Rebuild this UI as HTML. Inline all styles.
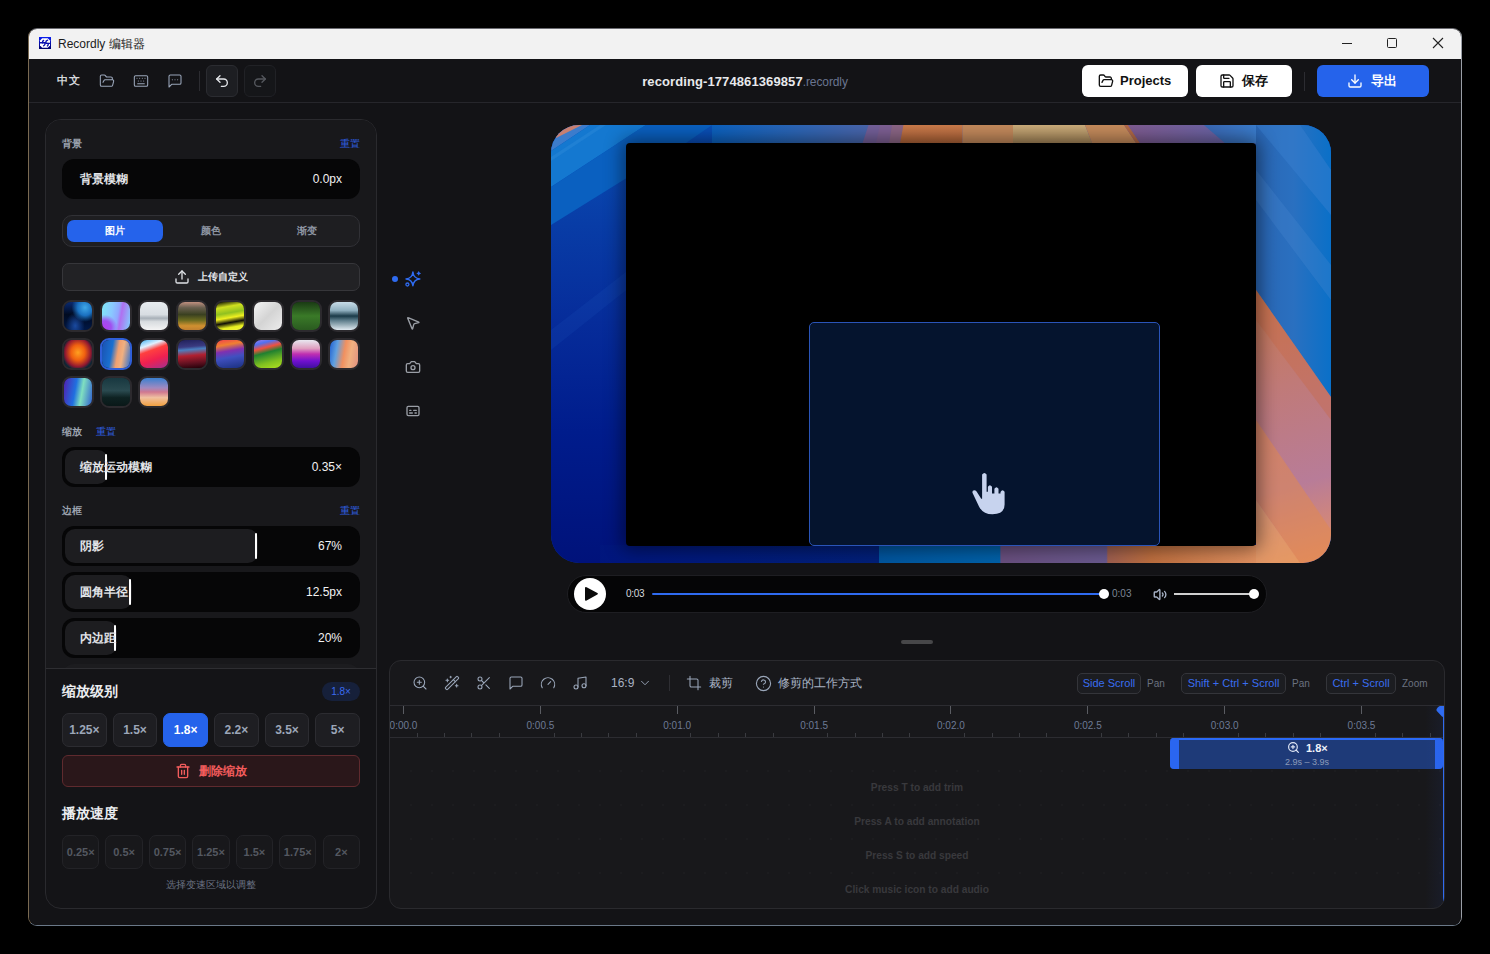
<!DOCTYPE html>
<html><head><meta charset="utf-8">
<style>
*{box-sizing:border-box;margin:0;padding:0}
html,body{width:1490px;height:954px;background:#000;overflow:hidden;font-family:"Liberation Sans",sans-serif}
.a{position:absolute}
#win{position:absolute;left:29px;top:29px;width:1432px;height:896px;border-radius:8px;overflow:hidden;background:#131316}
#pg{position:absolute;left:-29px;top:-29px;width:1490px;height:954px}
svg{display:block}
.ic{stroke:#9aa6b9;fill:none;stroke-width:1.6;stroke-linecap:round;stroke-linejoin:round}

.lab{left:62px;font-size:10px;font-weight:bold;color:#9ca3af;line-height:14px}
.rst{font-size:10px;color:#2f5fe0;line-height:12px;width:21px;text-align:right}
.sl{left:62px;width:298px;height:40px;border-radius:12px;background:#060607}
.slf{left:65px;height:34px;border-radius:10px;background:#1d1d20}
.sll{left:80px;font-size:12px;font-weight:bold;color:#e2e4e8;line-height:16px;white-space:nowrap}
.slv{left:240px;width:102px;text-align:right;font-size:12px;color:#f2f2f2;line-height:16px}
.tab{top:220px;width:96px;height:22px;line-height:22px;text-align:center;font-size:10px;font-weight:bold;color:#8f96a3}
.th{width:32px;height:32px;border:2px solid #2c2a2e;border-radius:9px}
.zb{top:713px;width:44.7px;height:34px;border-radius:7px;background:#1e1e22;border:1px solid #2c2c31;color:#9ca6b8;font-size:12px;font-weight:bold;line-height:32px;text-align:center}
.sb{top:835px;width:37.4px;height:34px;border-radius:7px;background:#18181b;border:1px solid #232327;color:#545861;font-size:11px;font-weight:bold;line-height:32px;text-align:center}

.rl{top:720px;width:60px;text-align:center;font-size:10px;color:#6d7a95;line-height:12px}
.kb{top:673px;height:21px;border-radius:5px;background:#1c1d21;border:1px solid #34353a;color:#3a6df0;font-size:11px;line-height:19px;text-align:center;white-space:nowrap}
.kt{top:677px;font-size:10px;color:#6b7280;line-height:13px}
.hint{left:767px;width:300px;text-align:center;font-size:10.2px;font-weight:bold;color:#39393d;line-height:12px;white-space:nowrap}
</style></head><body>
<div class="a" style="left:28px;top:28px;width:1434px;height:898px;border-radius:9px;border:1px solid #6a7888;border-left-color:#7a6a52;border-top-color:#6a6a70;border-right-color:#9a9ea6"></div>
<div id="win"><div id="pg">

<!-- title bar -->
<div class="a" style="left:29px;top:29px;width:1432px;height:30px;background:#f2f2f2"></div>
<svg class="a" style="left:39px;top:37px" width="12" height="12" viewBox="0 0 12 12"><defs><linearGradient id="ig" x1="0" y1="0" x2="0" y2="1"><stop offset="0" stop-color="#0a1ef0"/><stop offset="1" stop-color="#00006a"/></linearGradient><linearGradient id="gT2" x1="712" y1="0" x2="868" y2="0" gradientUnits="userSpaceOnUse"><stop offset="0" stop-color="#0c62c0"/><stop offset="0.5" stop-color="#2a66b8"/><stop offset="1" stop-color="#4a66ac"/></linearGradient>
  <linearGradient id="gO1" x1="0" y1="125" x2="0" y2="143" gradientUnits="userSpaceOnUse"><stop offset="0" stop-color="#cc7c4c"/><stop offset="1" stop-color="#b06438"/></linearGradient>
  <linearGradient id="gTan" x1="0" y1="125" x2="0" y2="143" gradientUnits="userSpaceOnUse"><stop offset="0" stop-color="#ccae7c"/><stop offset="1" stop-color="#a8885a"/></linearGradient>
  <linearGradient id="gP1" x1="1128" y1="0" x2="1225" y2="0" gradientUnits="userSpaceOnUse"><stop offset="0" stop-color="#805c92"/><stop offset="1" stop-color="#6a64a6"/></linearGradient>
  <linearGradient id="gBl1" x1="1204" y1="0" x2="1256" y2="0" gradientUnits="userSpaceOnUse"><stop offset="0" stop-color="#3a68b4"/><stop offset="1" stop-color="#3a7ccc"/></linearGradient>
 </defs><rect width="12" height="12" fill="url(#ig)"/><polygon points="3.2,1.2 8.8,1.2 11,3.4 11,8.6 8.8,10.8 3.2,10.8 1,8.6 1,3.4" fill="#fff"/><g fill="none" stroke="#0a10b0" stroke-width="1.4" stroke-linecap="round"><path d="M1 5.8 H6 Q7 5.8 7.5 6.4 L11 6.4"/><path d="M3.6 5.8 Q3.2 4.2 4.6 3.4"/><path d="M6.8 5.8 Q6.5 4 8.6 3.2"/><path d="M6 6.2 Q6.3 8.2 4.6 8.8"/><path d="M9 6.4 Q9.8 8 8.4 8.9"/></g></svg>
<div class="a" style="left:58px;top:36px;font-size:12px;color:#1b1b1b;line-height:16px;white-space:nowrap">Recordly 编辑器</div>
<div class="a" style="left:1342px;top:43px;width:10px;height:1px;background:#222"></div>
<div class="a" style="left:1387px;top:38px;width:10px;height:10px;border:1px solid #222;border-radius:1.5px"></div>
<svg class="a" style="left:1432px;top:37px" width="12" height="12" viewBox="0 0 12 12"><path d="M1 1 L11 11 M11 1 L1 11" stroke="#222" stroke-width="1.1"/></svg>

<!-- toolbar -->
<div class="a" style="left:57px;top:73px;font-size:11px;font-weight:bold;color:#d4d6da;line-height:14px;letter-spacing:0.5px">中文</div>
<svg class="a" style="left:99px;top:73px" width="16" height="16" viewBox="0 0 24 24" class="ic"><path class="ic" stroke-width="2" d="m6 14 1.5-2.9A2 2 0 0 1 9.24 10H20a2 2 0 0 1 1.94 2.5l-1.54 6a2 2 0 0 1-1.95 1.5H4a2 2 0 0 1-2-2V5a2 2 0 0 1 2-2h3.9a2 2 0 0 1 1.69.9l.81 1.2a2 2 0 0 0 1.67.9H18a2 2 0 0 1 2 2v2"/></svg>
<svg class="a" style="left:133px;top:73px" width="16" height="16" viewBox="0 0 24 24"><g class="ic" stroke-width="2"><path d="M10 8h.01M12 12h.01M14 8h.01M16 12h.01M18 8h.01M6 8h.01M7 16h10M8 12h.01"/><rect width="20" height="16" x="2" y="4" rx="2"/></g></svg>
<svg class="a" style="left:167px;top:73px" width="16" height="16" viewBox="0 0 24 24"><g class="ic" stroke-width="2"><path d="M21 15a2 2 0 0 1-2 2H7l-4 4V5a2 2 0 0 1 2-2h14a2 2 0 0 1 2 2z"/><path d="M8 10h.01M12 10h.01M16 10h.01"/></g></svg>
<div class="a" style="left:199px;top:71px;width:1px;height:20px;background:#2c2c31"></div>
<div class="a" style="left:206px;top:65px;width:32px;height:32px;border-radius:6px;background:#1d1e22;border:1px solid #2b2c31"></div>
<svg class="a" style="left:214px;top:73px" width="16" height="16" viewBox="0 0 24 24"><g fill="none" stroke="#e4e6ea" stroke-width="2" stroke-linecap="round" stroke-linejoin="round"><path d="M9 14 4 9l5-5"/><path d="M4 9h10.5a5.5 5.5 0 0 1 5.5 5.5a5.5 5.5 0 0 1-5.5 5.5H11"/></g></svg>
<div class="a" style="left:244px;top:65px;width:32px;height:32px;border-radius:6px;background:#151619;border:1px solid #212226"></div>
<svg class="a" style="left:252px;top:73px" width="16" height="16" viewBox="0 0 24 24"><g fill="none" stroke="#55585e" stroke-width="2" stroke-linecap="round" stroke-linejoin="round"><path d="m15 14 5-5-5-5"/><path d="M20 9H9.5A5.5 5.5 0 0 0 4 14.5A5.5 5.5 0 0 0 9.5 20H13"/></g></svg>

<div class="a" style="left:600px;top:73px;width:290px;text-align:center;line-height:16px;white-space:nowrap"><span style="font-size:13px;font-weight:bold;color:#e8e9ec;letter-spacing:0.1px">recording-1774861369857</span><span style="font-size:12px;color:#6a7590;letter-spacing:-0.1px">.recordly</span></div>

<div class="a" style="left:1082px;top:65px;width:106px;height:32px;border-radius:6px;background:#fff"></div>
<svg class="a" style="left:1098px;top:73px" width="16" height="16" viewBox="0 0 24 24"><path fill="none" stroke="#111" stroke-width="2" stroke-linecap="round" stroke-linejoin="round" d="m6 14 1.5-2.9A2 2 0 0 1 9.24 10H20a2 2 0 0 1 1.94 2.5l-1.54 6a2 2 0 0 1-1.95 1.5H4a2 2 0 0 1-2-2V5a2 2 0 0 1 2-2h3.9a2 2 0 0 1 1.69.9l.81 1.2a2 2 0 0 0 1.67.9H18a2 2 0 0 1 2 2v2"/></svg>
<div class="a" style="left:1120px;top:73px;font-size:13px;font-weight:bold;color:#111;line-height:16px">Projects</div>
<div class="a" style="left:1196px;top:65px;width:96px;height:32px;border-radius:6px;background:#fff"></div>
<svg class="a" style="left:1219px;top:73px" width="16" height="16" viewBox="0 0 24 24"><g fill="none" stroke="#111" stroke-width="2" stroke-linecap="round" stroke-linejoin="round"><path d="M15.2 3a2 2 0 0 1 1.4.6l3.8 3.8a2 2 0 0 1 .6 1.4V19a2 2 0 0 1-2 2H5a2 2 0 0 1-2-2V5a2 2 0 0 1 2-2z"/><path d="M17 21v-7a1 1 0 0 0-1-1H8a1 1 0 0 0-1 1v7"/><path d="M7 3v4a1 1 0 0 0 1 1h7"/></g></svg>
<div class="a" style="left:1242px;top:73px;font-size:13px;font-weight:bold;color:#111;line-height:16px">保存</div>
<div class="a" style="left:1304px;top:72px;width:1px;height:19px;background:#2c2c31"></div>
<div class="a" style="left:1317px;top:65px;width:112px;height:32px;border-radius:6px;background:#2563eb"></div>
<svg class="a" style="left:1347px;top:73px" width="16" height="16" viewBox="0 0 24 24"><g fill="none" stroke="#fff" stroke-width="2" stroke-linecap="round" stroke-linejoin="round"><path d="M12 15V3"/><path d="M21 15v4a2 2 0 0 1-2 2H5a2 2 0 0 1-2-2v-4"/><path d="m7 10 5 5 5-5"/></g></svg>
<div class="a" style="left:1371px;top:73px;font-size:13px;font-weight:bold;color:#fff;line-height:16px">导出</div>

<div class="a" style="left:29px;top:102px;width:1432px;height:1px;background:#26262b"></div>



<!-- side tools -->
<div class="a" style="left:392px;top:276px;width:6px;height:6px;border-radius:3px;background:#2f6bf0"></div>
<svg class="a" style="left:400px;top:266px" width="26" height="26" viewBox="0 0 26 26"><g fill="none" stroke="#2f6bf0" stroke-width="1.5" stroke-linejoin="round"><path d="M12.9 6 Q13.5 12.3 19.8 12.9 Q13.5 13.5 12.9 19.8 Q12.3 13.5 6 12.9 Q12.3 12.3 12.9 6 Z"/><circle cx="7.4" cy="18.5" r="1.5" stroke-width="1.3"/></g><path d="M18.7 5 Q19.2 6.9 21.1 7.4 Q19.2 7.9 18.7 9.8 Q18.2 7.9 16.3 7.4 Q18.2 6.9 18.7 5Z" fill="#2f6bf0"/></svg>
<svg class="a" style="left:405px;top:315px" width="16" height="16" viewBox="0 0 24 24"><path fill="none" stroke="#9a9ea6" stroke-width="2" stroke-linecap="round" stroke-linejoin="round" d="M4.037 4.688a.495.495 0 0 1 .651-.651l16 6.5a.5.5 0 0 1-.063.947l-6.124 1.58a2 2 0 0 0-1.438 1.435l-1.579 6.126a.5.5 0 0 1-.947.063z"/></svg>
<svg class="a" style="left:405px;top:359px" width="16" height="16" viewBox="0 0 24 24"><g fill="none" stroke="#9a9ea6" stroke-width="2" stroke-linecap="round" stroke-linejoin="round"><path d="M14.5 4h-5L7 7H4a2 2 0 0 0-2 2v9a2 2 0 0 0 2 2h16a2 2 0 0 0 2-2V9a2 2 0 0 0-2-2h-3l-2.5-3z"/><circle cx="12" cy="13" r="3"/></g></svg>
<svg class="a" style="left:405px;top:403px" width="16" height="16" viewBox="0 0 24 24"><g fill="none" stroke="#9a9ea6" stroke-width="2" stroke-linecap="round" stroke-linejoin="round"><rect width="18" height="14" x="3" y="5" rx="2" ry="2"/><path d="M7 15h4M15 15h2M7 11h2M13 11h4"/></g></svg>

<!-- preview -->
<div class="a" style="left:551px;top:125px;width:780px;height:438px;border-radius:28px;overflow:hidden;background:#0a3a9a">
<svg width="780" height="438" viewBox="551 125 780 438" style="position:absolute;left:0;top:0">
 <defs>
  <linearGradient id="gL" x1="0" y1="125" x2="0" y2="563" gradientUnits="userSpaceOnUse"><stop offset="0" stop-color="#0a50b8"/><stop offset="0.23" stop-color="#083ca6"/><stop offset="0.45" stop-color="#062c9a"/><stop offset="0.7" stop-color="#001c8c"/><stop offset="1" stop-color="#00127a"/></linearGradient>
  <linearGradient id="gT" x1="551" y1="0" x2="1331" y2="0" gradientUnits="userSpaceOnUse">
   <stop offset="0" stop-color="#2a88d8"/><stop offset="0.207" stop-color="#0c62c0"/><stop offset="0.32" stop-color="#3066b4"/>
   <stop offset="0.407" stop-color="#5a62a8"/><stop offset="0.41" stop-color="#7a5a98"/><stop offset="0.446" stop-color="#7a5a98"/>
   <stop offset="0.449" stop-color="#c87048"/><stop offset="0.527" stop-color="#c87450"/><stop offset="0.53" stop-color="#c88a60"/>
   <stop offset="0.578" stop-color="#c8a070"/><stop offset="0.666" stop-color="#c8a878"/><stop offset="0.669" stop-color="#c89060"/>
   <stop offset="0.747" stop-color="#c88858"/><stop offset="0.75" stop-color="#805a98"/><stop offset="0.83" stop-color="#6a64a8"/>
   <stop offset="0.87" stop-color="#3a70c0"/><stop offset="1" stop-color="#3a76c8"/></linearGradient>
  <linearGradient id="gB" x1="551" y1="0" x2="1331" y2="0" gradientUnits="userSpaceOnUse">
   <stop offset="0" stop-color="#00147e"/><stop offset="0.42" stop-color="#02207a"/><stop offset="0.421" stop-color="#0056a0"/>
   <stop offset="0.575" stop-color="#0062aa"/><stop offset="0.577" stop-color="#6a5080"/><stop offset="0.712" stop-color="#6a5a90"/>
   <stop offset="0.714" stop-color="#a06050"/><stop offset="0.77" stop-color="#c07040"/><stop offset="0.9" stop-color="#e09060"/><stop offset="1" stop-color="#e8a068"/></linearGradient>
  <linearGradient id="gRb" x1="1256" y1="125" x2="1331" y2="125" gradientUnits="userSpaceOnUse"><stop offset="0" stop-color="#2a66b4"/><stop offset="0.5" stop-color="#2a70c0"/><stop offset="1" stop-color="#0a70c8"/></linearGradient>
  <linearGradient id="gRo" x1="1256" y1="290" x2="1331" y2="563" gradientUnits="userSpaceOnUse"><stop offset="0" stop-color="#c87850"/><stop offset="0.35" stop-color="#c07a78"/><stop offset="0.7" stop-color="#b87c98"/><stop offset="1" stop-color="#e89060"/></linearGradient>
 </defs>
 <rect x="551" y="125" width="780" height="438" fill="url(#gL)"/>
 <polygon points="551,125 590,125 551,151" fill="#3c7ccc"/>
 <polygon points="551,151 590,125 646,125 551,187" fill="#1478d0"/>
 <polygon points="551,187 646,125 712,125 551,225" fill="#0a60c0"/>
 <polygon points="551,157 600,125 606,125 551,161" fill="#2a88d8" opacity="0.5"/>
 <polygon points="551,125 582,125 556,138" fill="#e08060" opacity="0.85"/>
 <polygon points="551,330 900,60 915,60 551,350" fill="#2a6ad0" opacity="0.12"/>
 <rect x="712" y="125" width="544" height="19" fill="url(#gT2)"/>
 <polygon points="868.5,125 1128,125 1140,143 862.6,143" fill="#74609a"/>
 <polygon points="880,125 892,125 889,143 876,143" fill="#7e6094"/>
 <polygon points="892,125 903.4,125 900,143 889,143" fill="#8c6686"/>
 <polygon points="903.4,125 962.4,125 962.4,143 900,143" fill="url(#gO1)"/>
 <polygon points="962.4,125 1013,125 1013,143 962.4,143" fill="#c48a5c"/>
 <polygon points="1013,125 1085,125 1092,143 1013,143" fill="url(#gTan)"/>
 <polygon points="1085,125 1124,125 1136,143 1092,143" fill="#c68c5c"/>
 <polygon points="1124,125 1128,125 1140,143 1136,143" fill="#b46a48"/>
 <polygon points="1128,125 1204,125 1225,143 1140,143" fill="url(#gP1)"/>
 <polygon points="1204,125 1256,125 1256,143 1225,143" fill="url(#gBl1)"/>
 <polygon points="646,125 712,125 686,143 618,143" fill="#0a60c0"/>
 <rect x="600" y="545" width="656" height="18" fill="url(#gB)"/>
 <rect x="1256" y="125" width="75" height="420" fill="url(#gRb)"/>
 <polygon points="1256,125 1300,125 1331,170 1331,215" fill="#3a80d0" opacity="0.45"/>
 <polygon points="1256,170 1256,200 1331,300 1331,265" fill="#4a88d0" opacity="0.3"/>
 <polygon points="1256,290 1331,397 1331,563 1256,563" fill="url(#gRo)"/>
 <polygon points="1256,420 1331,530 1331,563 1300,563 1256,500" fill="#e08850" opacity="0.55"/>
 <polygon points="1256,500 1300,563 1256,563" fill="#e8a060" opacity="0.6"/>
 <polygon points="1256,290 1331,397 1331,420 1256,320" fill="#c86848" opacity="0.4"/>
</svg>
 <div class="a" style="left:75px;top:18px;width:630px;height:403px;border-radius:4px;background:#000;box-shadow:0 0 18px 4px rgba(0,0,0,0.45)"></div>
 <div class="a" style="left:258px;top:197px;width:351px;height:224px;border-radius:5px;background:#05142e;border:1.5px solid #2a54b8"></div>
 <svg class="a" style="left:420px;top:346px" width="36" height="44" viewBox="0 0 36 44">
  <path d="M11.1 3.6 Q13.35 0.6 15.6 3.6 L15.6 20.7 L16.9 20.7 L16.9 15.8 Q18.95 12.6 21 15.8 L21 22.4 L23.4 22.4 L23.4 17.8 Q25.45 14.6 27.5 17.8 L27.5 22.4 L29.5 22.4 L29.5 21 Q31.5 17.6 33.6 20.8 L33.6 33.5 Q33.4 43.2 21.5 43.3 Q12 43.3 8 35.5 L1.6 22 Q0.8 19.6 3.2 19.2 Q4.6 19.2 5.6 20.6 L10.2 27.8 L11.1 27.8 Z" fill="#c7d3ee"/>
 </svg>
</div>

<!-- controls -->
<div class="a" style="left:567px;top:575px;width:700px;height:38px;border-radius:19px;background:#050506;border:1px solid #1e1e22"></div>
<div class="a" style="left:574px;top:578px;width:32px;height:32px;border-radius:16px;background:#fff"></div>
<svg class="a" style="left:580px;top:584px" width="20" height="20" viewBox="0 0 20 20"><path d="M6.6 3.2 Q5 2.3 5 4.2 L5 15.4 Q5 17.3 6.6 16.4 L17.4 10.6 Q18.6 9.8 17.4 9 Z" fill="#0a0a0a"/></svg>
<div class="a" style="left:626px;top:588px;font-size:10px;color:#d6d9de;line-height:12px;letter-spacing:-0.3px">0:03</div>
<div class="a" style="left:652px;top:593px;width:452px;height:2px;border-radius:1px;background:#2f6bf0"></div>
<div class="a" style="left:1099px;top:589px;width:10px;height:10px;border-radius:5px;background:#fff"></div>
<div class="a" style="left:1112px;top:588px;font-size:10px;color:#7d8595;line-height:12px">0:03</div>
<svg class="a" style="left:1153px;top:587px" width="15" height="15" viewBox="0 0 24 24"><g fill="none" stroke="#a8b3c6" stroke-width="2.2" stroke-linecap="round" stroke-linejoin="round"><path d="M11 4.702a.705.705 0 0 0-1.203-.498L6.413 7.587A1.4 1.4 0 0 1 5.416 8H3a1 1 0 0 0-1 1v6a1 1 0 0 0 1 1h2.416a1.4 1.4 0 0 1 .997.413l3.383 3.384A.705.705 0 0 0 11 19.298z"/><path d="M15 9.5a3.5 3.5 0 0 1 0 5"/><path d="M18.5 7a7 7 0 0 1 0 10"/></g></svg>
<div class="a" style="left:1174px;top:593px;width:82px;height:2px;background:#d0d0d0"></div>
<div class="a" style="left:1249px;top:589px;width:10px;height:10px;border-radius:5px;background:#fff"></div>

<div class="a" style="left:901px;top:640px;width:32px;height:4px;border-radius:2px;background:#474749"></div>

<!-- timeline -->
<div class="a" style="left:389px;top:660px;width:1056px;height:249px;border:1px solid #2a2a2e;border-radius:12px;background:#18181b;overflow:hidden"></div>
<div class="a" style="left:390px;top:661px;width:1054px;height:247px;border-radius:11px;overflow:hidden">
<div class="a" style="left:-390px;top:-661px;width:1490px;height:954px">
<svg class="a" style="left:412px;top:675px" width="16" height="16" viewBox="0 0 24 24"><g class="ic" stroke-width="2"><circle cx="11" cy="11" r="8"/><path d="m21 21-4.3-4.3M11 8v6M8 11h6"/></g></svg>
<svg class="a" style="left:444px;top:675px" width="16" height="16" viewBox="0 0 24 24"><g class="ic" stroke-width="2"><path d="m21.64 3.64-1.28-1.28a1.21 1.21 0 0 0-1.72 0L2.36 18.64a1.21 1.21 0 0 0 0 1.72l1.28 1.28a1.2 1.2 0 0 0 1.72 0L21.64 5.36a1.2 1.2 0 0 0 0-1.72"/><path d="m14 7 3 3M5 6v4M19 14v4M10 2v2M7 8H3M21 16h-4M11 3H9"/></g></svg>
<svg class="a" style="left:476px;top:675px" width="16" height="16" viewBox="0 0 24 24"><g class="ic" stroke-width="2"><circle cx="6" cy="6" r="3"/><path d="M8.12 8.12 12 12M20 4 8.12 15.88"/><circle cx="6" cy="18" r="3"/><path d="M14.8 14.8 20 20"/></g></svg>
<svg class="a" style="left:508px;top:675px" width="16" height="16" viewBox="0 0 24 24"><g class="ic" stroke-width="2"><path d="M21 15a2 2 0 0 1-2 2H7l-4 4V5a2 2 0 0 1 2-2h14a2 2 0 0 1 2 2z"/></g></svg>
<svg class="a" style="left:540px;top:675px" width="16" height="16" viewBox="0 0 24 24"><g class="ic" stroke-width="2"><path d="m12 14 4-4M3.34 19a10 10 0 1 1 17.32 0"/></g></svg>
<svg class="a" style="left:572px;top:675px" width="16" height="16" viewBox="0 0 24 24"><g class="ic" stroke-width="2"><path d="M9 18V5l12-2v13"/><circle cx="6" cy="18" r="3"/><circle cx="18" cy="16" r="3"/></g></svg>
<div class="a" style="left:611px;top:676px;font-size:12px;color:#a9b3c4;line-height:14px">16:9</div>
<svg class="a" style="left:638px;top:676px" width="14" height="14" viewBox="0 0 24 24"><path class="ic" stroke-width="2" d="m6 9 6 6 6-6"/></svg>
<div class="a" style="left:669px;top:675px;width:1px;height:16px;background:#2e2e33"></div>
<svg class="a" style="left:686px;top:675px" width="16" height="16" viewBox="0 0 24 24"><g class="ic" stroke-width="2.2"><path d="M6 2v14a2 2 0 0 0 2 2h14"/><path d="M18 22V8a2 2 0 0 0-2-2H2"/></g></svg>
<div class="a" style="left:709px;top:676px;font-size:12px;color:#a9b3c4;line-height:14px">裁剪</div>
<svg class="a" style="left:755px;top:675px" width="17" height="17" viewBox="0 0 24 24"><g class="ic" stroke-width="1.8"><circle cx="12" cy="12" r="10"/><path d="M9.09 9a3 3 0 0 1 5.83 1c0 2-3 3-3 3M12 17h.01"/></g></svg>
<div class="a" style="left:778px;top:676px;font-size:12px;color:#a9b3c4;line-height:14px">修剪的工作方式</div>

<div class="a kb" style="left:1077px;width:64px">Side Scroll</div>
<div class="a kt" style="left:1147px">Pan</div>
<div class="a kb" style="left:1181px;width:105px">Shift + Ctrl + Scroll</div>
<div class="a kt" style="left:1292px">Pan</div>
<div class="a kb" style="left:1326px;width:70px">Ctrl + Scroll</div>
<div class="a kt" style="left:1402px">Zoom</div>

<div class="a" style="left:389px;top:705px;width:1056px;height:1px;background:#2c2c31"></div>
<div class="a" style="left:389px;top:737px;width:1056px;height:1px;background:#2c2c31"></div>
<div class="a" style="left:403.0px;top:706px;width:1px;height:8px;background:#5a5c62"></div>
<div class="a rl" style="left:373.5px">0:00.0</div>
<div class="a" style="left:539.9px;top:706px;width:1px;height:8px;background:#5a5c62"></div>
<div class="a rl" style="left:510.4px">0:00.5</div>
<div class="a" style="left:676.7px;top:706px;width:1px;height:8px;background:#5a5c62"></div>
<div class="a rl" style="left:647.2px">0:01.0</div>
<div class="a" style="left:813.6px;top:706px;width:1px;height:8px;background:#5a5c62"></div>
<div class="a rl" style="left:784.1px">0:01.5</div>
<div class="a" style="left:950.4px;top:706px;width:1px;height:8px;background:#5a5c62"></div>
<div class="a rl" style="left:920.9px">0:02.0</div>
<div class="a" style="left:1087.3px;top:706px;width:1px;height:8px;background:#5a5c62"></div>
<div class="a rl" style="left:1057.8px">0:02.5</div>
<div class="a" style="left:1224.2px;top:706px;width:1px;height:8px;background:#5a5c62"></div>
<div class="a rl" style="left:1194.7px">0:03.0</div>
<div class="a" style="left:1361.0px;top:706px;width:1px;height:8px;background:#5a5c62"></div>
<div class="a rl" style="left:1331.5px">0:03.5</div>
<div class="a" style="left:416.7px;top:733px;width:1px;height:4px;background:#3a3b40"></div>
<div class="a" style="left:444.1px;top:733px;width:1px;height:4px;background:#3a3b40"></div>
<div class="a" style="left:471.4px;top:733px;width:1px;height:4px;background:#3a3b40"></div>
<div class="a" style="left:498.8px;top:733px;width:1px;height:4px;background:#3a3b40"></div>
<div class="a" style="left:553.5px;top:733px;width:1px;height:4px;background:#3a3b40"></div>
<div class="a" style="left:580.9px;top:733px;width:1px;height:4px;background:#3a3b40"></div>
<div class="a" style="left:608.3px;top:733px;width:1px;height:4px;background:#3a3b40"></div>
<div class="a" style="left:635.7px;top:733px;width:1px;height:4px;background:#3a3b40"></div>
<div class="a" style="left:690.4px;top:733px;width:1px;height:4px;background:#3a3b40"></div>
<div class="a" style="left:717.8px;top:733px;width:1px;height:4px;background:#3a3b40"></div>
<div class="a" style="left:745.2px;top:733px;width:1px;height:4px;background:#3a3b40"></div>
<div class="a" style="left:772.5px;top:733px;width:1px;height:4px;background:#3a3b40"></div>
<div class="a" style="left:827.3px;top:733px;width:1px;height:4px;background:#3a3b40"></div>
<div class="a" style="left:854.6px;top:733px;width:1px;height:4px;background:#3a3b40"></div>
<div class="a" style="left:882.0px;top:733px;width:1px;height:4px;background:#3a3b40"></div>
<div class="a" style="left:909.4px;top:733px;width:1px;height:4px;background:#3a3b40"></div>
<div class="a" style="left:964.1px;top:733px;width:1px;height:4px;background:#3a3b40"></div>
<div class="a" style="left:991.5px;top:733px;width:1px;height:4px;background:#3a3b40"></div>
<div class="a" style="left:1018.9px;top:733px;width:1px;height:4px;background:#3a3b40"></div>
<div class="a" style="left:1046.2px;top:733px;width:1px;height:4px;background:#3a3b40"></div>
<div class="a" style="left:1101.0px;top:733px;width:1px;height:4px;background:#3a3b40"></div>
<div class="a" style="left:1128.4px;top:733px;width:1px;height:4px;background:#3a3b40"></div>
<div class="a" style="left:1155.7px;top:733px;width:1px;height:4px;background:#3a3b40"></div>
<div class="a" style="left:1183.1px;top:733px;width:1px;height:4px;background:#3a3b40"></div>
<div class="a" style="left:1237.8px;top:733px;width:1px;height:4px;background:#3a3b40"></div>
<div class="a" style="left:1265.2px;top:733px;width:1px;height:4px;background:#3a3b40"></div>
<div class="a" style="left:1292.6px;top:733px;width:1px;height:4px;background:#3a3b40"></div>
<div class="a" style="left:1320.0px;top:733px;width:1px;height:4px;background:#3a3b40"></div>
<div class="a" style="left:1374.7px;top:733px;width:1px;height:4px;background:#3a3b40"></div>
<div class="a" style="left:1402.1px;top:733px;width:1px;height:4px;background:#3a3b40"></div>
<div class="a" style="left:1429.5px;top:733px;width:1px;height:4px;background:#3a3b40"></div>


<div class="a" style="left:390px;top:770px;width:1054px;height:2px;background:repeating-linear-gradient(90deg,transparent 0 20px,#1f1f23 20px 21px);background-position:0.5px 0"></div>
<div class="a" style="left:390px;top:804px;width:1054px;height:2px;background:repeating-linear-gradient(90deg,transparent 0 20px,#1f1f23 20px 21px);background-position:0.5px 0"></div>
<div class="a" style="left:390px;top:838px;width:1054px;height:2px;background:repeating-linear-gradient(90deg,transparent 0 20px,#1f1f23 20px 21px);background-position:0.5px 0"></div>
<div class="a" style="left:390px;top:872px;width:1054px;height:2px;background:repeating-linear-gradient(90deg,transparent 0 20px,#1f1f23 20px 21px);background-position:0.5px 0"></div>
<div class="a hint" style="top:782px">Press T to add trim</div>
<div class="a hint" style="top:816px">Press A to add annotation</div>
<div class="a hint" style="top:850px">Press S to add speed</div>
<div class="a hint" style="top:884px">Click music icon to add audio</div>

<div class="a" style="left:1170px;top:738px;width:273px;height:31px;background:#1e3a78;border-radius:4px;overflow:hidden"><div class="a" style="left:0;top:0;width:273px;height:2px;background:#2a6af8"></div><div class="a" style="left:0;top:0;width:9px;height:31px;background:#2a66f0"></div><div class="a" style="left:265px;top:0;width:8px;height:31px;background:#2a66f0"></div></div>
<svg class="a" style="left:1287px;top:741px" width="13" height="13" viewBox="0 0 24 24"><g fill="none" stroke="#dfe6f5" stroke-width="2.2" stroke-linecap="round"><circle cx="11" cy="11" r="8"/><path d="m21 21-4.3-4.3M11 8v6M8 11h6"/></g></svg>
<div class="a" style="left:1306px;top:742px;font-size:11px;font-weight:bold;color:#f0f3fa;line-height:12px">1.8×</div>
<div class="a" style="left:1270px;top:757px;width:74px;text-align:center;font-size:9px;color:#8d9ab8;line-height:10px">2.9s – 3.9s</div>

<div class="a" style="left:1425px;top:706px;width:18px;height:202px;background:linear-gradient(90deg,transparent,rgba(40,80,200,0.08))"></div>
<div class="a" style="left:1442.5px;top:706px;width:1.6px;height:202px;background:#2f6bf0"></div>
<svg class="a" style="left:1436px;top:705px" width="8" height="13" viewBox="0 0 8 13"><path d="M8 1 L4.5 1 Q3 1 2 2.2 L0.8 3.8 Q0 5 0.8 6 L6 11.5 L8 12.5 Z" fill="#2f6bf0"/></svg>
</div></div>
<!-- left panel -->
<div class="a" style="left:45px;top:119px;width:332px;height:790px;border:1px solid #2a2a2e;border-radius:16px;background:#141417;overflow:hidden">
 <div class="a" style="left:0;top:0;width:330px;height:549px;background:#18181b;border-bottom:1px solid #2e2e32"></div>
</div>
<div class="a" style="left:46px;top:120px;width:330px;height:548px;overflow:hidden">
<div class="a" style="left:-46px;top:-120px;width:1490px;height:954px">
<div class="a lab" style="top:137px">背景</div>
<div class="a rst" style="left:339px;top:138px">重置</div>
<div class="a sl" style="top:159px"></div>
<div class="a sll" style="top:171px">背景模糊</div>
<div class="a slv" style="top:171px">0.0px</div>
<div class="a" style="left:62px;top:215px;width:298px;height:32px;border-radius:10px;background:#1e1e21;border:1px solid #313136"></div>
<div class="a" style="left:67px;top:220px;width:96px;height:22px;border-radius:7px;background:#2563eb"></div>
<div class="a tab" style="left:67px;color:#fff">图片</div>
<div class="a tab" style="left:163px">颜色</div>
<div class="a tab" style="left:259px">渐变</div>
<div class="a" style="left:62px;top:263px;width:298px;height:28px;border-radius:7px;background:#222225;border:1px solid #36363a"></div>
<svg class="a" style="left:174px;top:269px" width="16" height="16" viewBox="0 0 24 24"><g fill="none" stroke="#dfe2e6" stroke-width="2" stroke-linecap="round" stroke-linejoin="round"><path d="M12 3v12"/><path d="m17 8-5-5-5 5"/><path d="M21 15v4a2 2 0 0 1-2 2H5a2 2 0 0 1-2-2v-4"/></g></svg>
<div class="a" style="left:198px;top:270px;font-size:10px;font-weight:bold;color:#e4e6ea;line-height:14px">上传自定义</div>

<div class="a th" style="left:62px;top:300px;border-color:#2c2a2e"><div style="width:100%;height:100%;border-radius:7px;background:radial-gradient(ellipse at 75% 20%,#40a8e8 0,#1a70c0 25%,transparent 45%),radial-gradient(ellipse at 40% 85%,#1a4aa0 0,transparent 40%),linear-gradient(180deg,#0a2a70,#000a20 45%,#001848 100%)"></div></div>
<div class="a th" style="left:100px;top:300px;border-color:#2c2a2e"><div style="width:100%;height:100%;border-radius:7px;background:radial-gradient(circle at 10% 90%,#b040f0 0,#a050f0 18%,transparent 35%),linear-gradient(100deg,#80e8f8 0%,#8ac8ff 35%,#90a8ff 55%,#b070f0 65%,#80d0ff 100%)"></div></div>
<div class="a th" style="left:138px;top:300px;border-color:#2c2a2e"><div style="width:100%;height:100%;border-radius:7px;background:linear-gradient(180deg,#e8ecf0 0%,#d8dde2 45%,#a8b0b8 58%,#d8dcdf 70%,#f4f4f4 100%)"></div></div>
<div class="a th" style="left:176px;top:300px;border-color:#2c2a2e"><div style="width:100%;height:100%;border-radius:7px;background:linear-gradient(180deg,#c09080 0%,#6a6050 20%,#3a4020 45%,#6a6a20 65%,#d09030 85%,#c08030 100%)"></div></div>
<div class="a th" style="left:214px;top:300px;border-color:#2c2a2e"><div style="width:100%;height:100%;border-radius:7px;background:linear-gradient(170deg,#000 0%,#d0e020 20%,#90c020 40%,#f0f020 55%,#101008 70%,#e8f020 85%,#f0f040 100%)"></div></div>
<div class="a th" style="left:252px;top:300px;border-color:#2c2a2e"><div style="width:100%;height:100%;border-radius:7px;background:linear-gradient(135deg,#f4f4f4 0%,#d4d4d4 50%,#ececec 100%)"></div></div>
<div class="a th" style="left:290px;top:300px;border-color:#2c2a2e"><div style="width:100%;height:100%;border-radius:7px;background:linear-gradient(180deg,#1a3a14 0%,#3a7a28 50%,#2a5a20 100%)"></div></div>
<div class="a th" style="left:328px;top:300px;border-color:#2c2a2e"><div style="width:100%;height:100%;border-radius:7px;background:linear-gradient(180deg,#c8dce8 0%,#90b0c0 30%,#1a3a48 50%,#5a7a88 65%,#e0eaf0 100%)"></div></div>
<div class="a th" style="left:62px;top:338px;border-color:#2c2a2e"><div style="width:100%;height:100%;border-radius:7px;background:radial-gradient(ellipse at 50% 45%,#ffa020 0,#f06010 35%,#901830 65%,transparent 80%),linear-gradient(#082030,#102838)"></div></div>
<div class="a th" style="left:100px;top:338px;border-color:#2f5fd8"><div style="width:100%;height:100%;border-radius:7px;background:linear-gradient(100deg,#1a50b0 0%,#1a70d0 35%,#f0a070 55%,#f0b080 70%,#3070d0 100%)"></div></div>
<div class="a th" style="left:138px;top:338px;border-color:#2c2a2e"><div style="width:100%;height:100%;border-radius:7px;background:linear-gradient(160deg,#40b0f0 0%,#e0f0ff 22%,#ff4040 38%,#f02050 65%,#a03090 100%)"></div></div>
<div class="a th" style="left:176px;top:338px;border-color:#2c2a2e"><div style="width:100%;height:100%;border-radius:7px;background:linear-gradient(175deg,#20205a 0%,#3a3a80 25%,#4a80c0 35%,#b02030 55%,#601020 80%,#200008 100%)"></div></div>
<div class="a th" style="left:214px;top:338px;border-color:#2c2a2e"><div style="width:100%;height:100%;border-radius:7px;background:linear-gradient(170deg,#f04050 0%,#f08030 20%,#8030b0 40%,#4050c0 60%,#1a3080 100%)"></div></div>
<div class="a th" style="left:252px;top:338px;border-color:#2c2a2e"><div style="width:100%;height:100%;border-radius:7px;background:linear-gradient(165deg,#a080f0 0%,#5070f0 15%,#f05040 30%,#208030 45%,#80c020 75%,#b0e020 100%)"></div></div>
<div class="a th" style="left:290px;top:338px;border-color:#2c2a2e"><div style="width:100%;height:100%;border-radius:7px;background:linear-gradient(180deg,#e8e8f0 0%,#e0a0c0 30%,#c030b0 50%,#7010d0 75%,#4010a0 100%)"></div></div>
<div class="a th" style="left:328px;top:338px;border-color:#2c2a2e"><div style="width:100%;height:100%;border-radius:7px;background:linear-gradient(100deg,#2060d0 0%,#60a0e0 25%,#f09060 50%,#f0b080 70%,#e09080 100%)"></div></div>
<div class="a th" style="left:62px;top:376px;border-color:#2c2a2e"><div style="width:100%;height:100%;border-radius:7px;background:linear-gradient(100deg,#5020b0 0%,#2070e0 40%,#80e0c0 62%,#3060d0 100%)"></div></div>
<div class="a th" style="left:100px;top:376px;border-color:#2c2a2e"><div style="width:100%;height:100%;border-radius:7px;background:linear-gradient(180deg,#183840 0%,#2a4a50 45%,#0e2222 70%,#0a1818 100%)"></div></div>
<div class="a th" style="left:138px;top:376px;border-color:#2c2a2e"><div style="width:100%;height:100%;border-radius:7px;background:linear-gradient(180deg,#3a80d0 0%,#a08ac0 35%,#d07890 50%,#f0c0a0 70%,#f0a040 100%)"></div></div>
<div class="a lab" style="top:425px">缩放</div>
<div class="a rst" style="left:95px;top:426px">重置</div>
<div class="a sl" style="top:447px"></div>
<div class="a slf" style="top:450px;width:43px"></div>
<div class="a" style="left:105px;top:454px;width:2px;height:26px;background:#fff;border-radius:1px"></div>
<div class="a sll" style="top:459px">缩放运动模糊</div>
<div class="a slv" style="top:459px">0.35×</div>

<div class="a lab" style="top:504px">边框</div>
<div class="a rst" style="left:339px;top:505px">重置</div>
<div class="a sl" style="top:526px"></div>
<div class="a slf" style="top:529px;width:193px"></div>
<div class="a" style="left:255px;top:533px;width:2px;height:26px;background:#fff;border-radius:1px"></div>
<div class="a sll" style="top:538px">阴影</div>
<div class="a slv" style="top:538px">67%</div>

<div class="a sl" style="top:572px"></div>
<div class="a slf" style="top:575px;width:67px"></div>
<div class="a" style="left:129px;top:579px;width:2px;height:26px;background:#fff;border-radius:1px"></div>
<div class="a sll" style="top:584px">圆角半径</div>
<div class="a slv" style="top:584px">12.5px</div>

<div class="a sl" style="top:618px"></div>
<div class="a slf" style="top:621px;width:52px"></div>
<div class="a" style="left:114px;top:625px;width:2px;height:26px;background:#fff;border-radius:1px"></div>
<div class="a sll" style="top:630px">内边距</div>
<div class="a slv" style="top:630px">20%</div>

<div class="a" style="left:62px;top:664px;width:298px;height:40px;border-radius:12px;background:#1c1c1f"></div>

</div></div>

<div class="a" style="left:62px;top:682px;font-size:14px;font-weight:bold;color:#eceef1;line-height:18px">缩放级别</div>
<div class="a" style="left:322px;top:682px;width:38px;height:19px;border-radius:10px;background:#16203a;color:#3b6cf0;font-size:10px;line-height:19px;text-align:center">1.8×</div>
<div class="a zb" style="left:62px">1.25×</div>
<div class="a zb" style="left:112.7px">1.5×</div>
<div class="a zb" style="left:163.3px;background:#2563eb;border-color:#2563eb;color:#fff">1.8×</div>
<div class="a zb" style="left:214px">2.2×</div>
<div class="a zb" style="left:264.7px">3.5×</div>
<div class="a zb" style="left:315.3px">5×</div>
<div class="a" style="left:62px;top:755px;width:298px;height:32px;border-radius:6px;background:#2a171a;border:1px solid #5f2a2e"></div>
<svg class="a" style="left:175px;top:763px" width="16" height="16" viewBox="0 0 24 24"><g fill="none" stroke="#f25c5c" stroke-width="2" stroke-linecap="round" stroke-linejoin="round"><path d="M3 6h18"/><path d="M19 6v14c0 1-1 2-2 2H7c-1 0-2-1-2-2V6"/><path d="M8 6V4c0-1 1-2 2-2h4c1 0 2 1 2 2v2"/><path d="M10 11v6M14 11v6"/></g></svg>
<div class="a" style="left:199px;top:764px;font-size:12px;font-weight:bold;color:#f25c5c;line-height:14px">删除缩放</div>
<div class="a" style="left:62px;top:804px;font-size:14px;font-weight:bold;color:#eceef1;line-height:18px">播放速度</div>
<div class="a sb" style="left:62px">0.25×</div>
<div class="a sb" style="left:105.4px">0.5×</div>
<div class="a sb" style="left:148.9px">0.75×</div>
<div class="a sb" style="left:192.3px">1.25×</div>
<div class="a sb" style="left:235.7px">1.5×</div>
<div class="a sb" style="left:279.1px">1.75×</div>
<div class="a sb" style="left:322.6px">2×</div>
<div class="a" style="left:62px;top:878px;width:298px;text-align:center;font-size:10px;color:#6b7384;line-height:14px">选择变速区域以调整</div>
</div></div>
</body></html>
